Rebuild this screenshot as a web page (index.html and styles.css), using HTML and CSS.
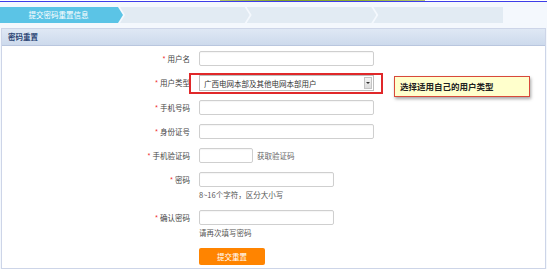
FILE: index.html
```html
<!DOCTYPE html>
<html lang="zh-CN">

<head>
    <meta charset="UTF-8">
    <meta name="viewport" content="width=device-width, initial-scale=1.0">
    <title>密码重置</title>
    <link rel="stylesheet" href="styles.css">
</head>

<body>
    <div class="topbar"><span class="banner"></span></div>

    <!-- 步骤条 -->
    <div class="steps">
        <div class="step first active">提交密码重置信息</div>
        <div class="step"></div>
        <div class="step"></div>
        <div class="step last"></div>
    </div>

    <div class="panel">
        <div class="panel-head">密码重置</div>
        <div class="panel-body">
            <div class="row">
                <label class="label"><em>*</em> 用户名</label>
                <div class="input wide"></div>
            </div>

            <div class="row row-type">
                <label class="label"><em>*</em> 用户类型</label>
                <div class="select">
                    <span>广西电网本部及其他电网本部用户</span>
                    <span class="select-btn"></span>
                </div>
                <div class="highlight"></div>
                <div class="tip">选择适用自己的用户类型</div>
            </div>

            <div class="row">
                <label class="label"><em>*</em> 手机号码</label>
                <div class="input wide"></div>
            </div>

            <div class="row">
                <label class="label"><em>*</em> 身份证号</label>
                <div class="input wide"></div>
            </div>

            <div class="row">
                <label class="label"><em>*</em> 手机验证码</label>
                <div class="input short"></div>
                <span class="get-code">获取验证码</span>
            </div>

            <div class="row row-hint">
                <label class="label"><em>*</em> 密码</label>
                <div class="field">
                    <div class="input mid"></div>
                    <p class="hint">8~16个字符，区分大小写</p>
                </div>
            </div>

            <div class="row row-hint">
                <label class="label"><em>*</em> 确认密码</label>
                <div class="field">
                    <div class="input mid"></div>
                    <p class="hint">请再次填写密码</p>
                </div>
            </div>

            <div class="row row-btn">
                <span class="label"></span>
                <button class="submit">提交重置</button>
            </div>
        </div>
    </div>
</body>

</html>
```

FILE: styles.css
```css
body {
    margin: 0;
    padding: 0;
    background: #f4f8fd;
    font-family: "Noto Sans CJK SC", "Noto Sans", sans-serif;
    font-size: 7.5px;
    color: #444;
}

.topbar {
    height: 1px;
    background: #fff;
    border-bottom: 1px solid #3d3de8;
}

.banner {
    display: block;
    width: 205px;
    height: 1px;
    margin-left: 220px;
    background: linear-gradient(90deg, #b2c46a, #7f9f2a 30%, #8fae34 70%, #b8c878);
}

/* 步骤条 */
.steps {
    display: flex;
    width: 503px;
    height: 16px;
    margin-top: 5px;
}

.step {
    flex: 1;
    margin-left: -3px;
    background: #e2ebf3;
    color: #fff;
    line-height: 16px;
    text-align: center;
    clip-path: polygon(0 0, calc(100% - 5px) 0, 100% 50%, calc(100% - 5px) 100%, 0 100%, 5px 50%);
}

.step.first {
    flex: 0 0 123px;
    margin-left: 0;
    padding-right: 6px;
    box-sizing: border-box;
    clip-path: polygon(0 0, calc(100% - 5px) 0, 100% 50%, calc(100% - 5px) 100%, 0 100%);
}

.step.last {
    clip-path: polygon(0 0, 100% 0, 100% 100%, 0 100%, 5px 50%);
}

.step.active {
    background: #5bc4e6;
}

/* 面板 */
.panel {
    margin: 5px 1px 0 1px;
    background: #fff;
    border: 1px solid #cdd5e8;
}

.panel-head {
    height: 16px;
    line-height: 16px;
    padding-left: 6px;
    background: linear-gradient(#dfe8f4, #cddaec);
    border-bottom: 1px solid #b9c6de;
    font-weight: bold;
    color: #2a4474;
}

.panel-body {
    padding: 5px 0 3px 0;
}

.row {
    display: flex;
    align-items: flex-start;
    margin-bottom: 9px;
}

.label {
    width: 188px;
    margin-right: 9px;
    flex-shrink: 0;
    text-align: right;
    line-height: 15px;
    color: #444;
}

.label em {
    font-style: normal;
    color: #e33;
}

.input {
    height: 15px;
    box-sizing: border-box;
    border: 1px solid #cfcfcf;
    border-radius: 2px;
    background: #fff;
    box-shadow: inset 0 1px 1px rgba(0, 0, 0, 0.04);
}

.input.wide {
    width: 175px;
}

.input.mid {
    width: 135px;
}

.input.short {
    width: 54px;
}

.get-code {
    margin-left: 4px;
    line-height: 15px;
    color: #666;
}

.row-type {
    position: relative;
    margin-top: 7px;
    margin-bottom: 9px;
}

.select {
    display: flex;
    align-items: center;
    justify-content: space-between;
    width: 175px;
    height: 16px;
    box-sizing: border-box;
    padding-left: 4px;
    border: 1px solid #bdbdbd;
    background: #fff;
    color: #333;
}

.select-btn {
    width: 8px;
    height: 12px;
    margin-right: 1px;
    background: linear-gradient(#f4f4f4, #dcdcdc);
    border: 1px solid #c4c4c4;
    box-sizing: border-box;
    position: relative;
}

.select-btn::after {
    content: "";
    position: absolute;
    left: 1px;
    top: 4px;
    border-left: 2px solid transparent;
    border-right: 2px solid transparent;
    border-top: 2px solid #333;
}

.highlight {
    position: absolute;
    left: 187px;
    top: -2px;
    width: 194px;
    height: 21px;
    box-sizing: border-box;
    border: 2px solid #e0282a;
}

.tip {
    position: absolute;
    left: 392px;
    top: 1px;
    width: 136px;
    height: 21px;
    box-sizing: border-box;
    padding-left: 5px;
    border: 1px solid #d8493a;
    background: #ffffcc;
    box-shadow: 1px 2px 3px rgba(0, 0, 0, 0.35);
    font-size: 8.5px;
    font-weight: bold;
    line-height: 19px;
    color: #222;
}

.field {
    display: flex;
    flex-direction: column;
}

.hint {
    margin: 3px 0 0 0;
    line-height: 10px;
    color: #555;
}

.row-hint {
    margin-bottom: 10px;
}

.row-hint + .row-btn {
    margin-top: 1px;
}

.row-btn {
    margin-bottom: 0;
}

.submit {
    width: 66px;
    height: 17px;
    padding: 0;
    border: none;
    border-radius: 2px;
    background: #ff8400;
    color: #fff;
    font-family: inherit;
    font-size: 7.5px;
}
```
